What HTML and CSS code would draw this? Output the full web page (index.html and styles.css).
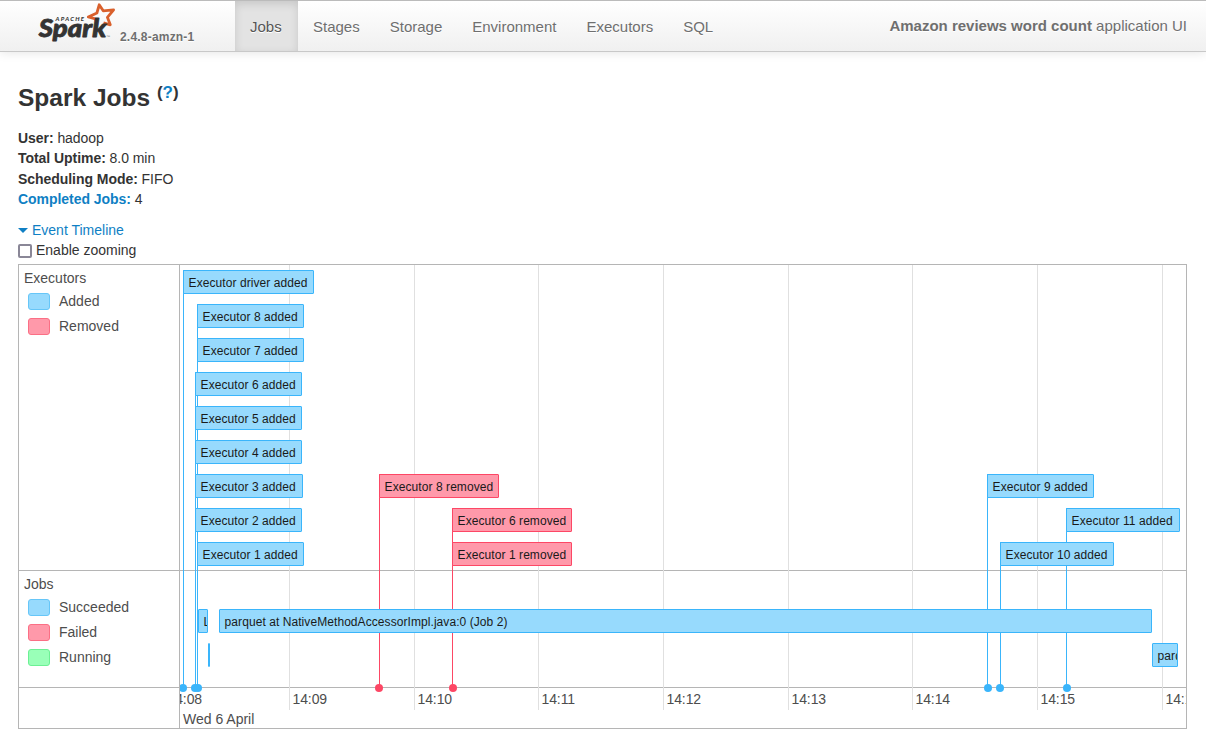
FILE: index.html
```html
<!DOCTYPE html>
<html lang="en">
<head>
<meta charset="utf-8">
<title>Spark Jobs</title>
<link rel="stylesheet" href="styles.css">
</head>
<body>
<header class="navbar">
  <a class="brand">
    <svg class="logo" width="82" height="50" viewBox="30 0 82 50" overflow="visible">
      <path class="logo-star" d="M96.500 20.500 94.500 18.600 88.300 17 96.900 13 99.200 4.800 103.200 10.800 113.600 9.800 107.400 17.300 110.300 24.800 103.500 22.800"/>
      <text class="logo-small" x="55.500" y="20.600" textLength="28.500">APACHE</text>
      <text class="logo-word" x="38.800" y="37.300" textLength="67.500" lengthAdjust="spacingAndGlyphs">Spark</text>
      <text class="logo-tm" x="106" y="37.500">™</text>
    </svg>
    <span class="version">2.4.8-amzn-1</span>
  </a>
  <nav class="tabs">
    <a class="tab active">Jobs</a><a class="tab">Stages</a><a class="tab">Storage</a><a class="tab">Environment</a><a class="tab">Executors</a><a class="tab">SQL</a>
  </nav>
  <p class="app-name"><strong>Amazon reviews word count</strong> application UI</p>
</header>
<main class="content">
  <h3 class="title">Spark Jobs <sup>(<a class="link">?</a>)</sup></h3>
  <ul class="summary">
    <li><strong>User:</strong> hadoop</li>
    <li><strong>Total Uptime:</strong> 8.0 min</li>
    <li><strong>Scheduling Mode:</strong> FIFO</li>
    <li><a class="link"><strong>Completed Jobs:</strong></a> 4</li>
  </ul>
  <div class="expand link"><span class="arrow"></span>Event Timeline</div>
  <div class="zooming"><span class="checkbox"></span><span class="zooming-label">Enable zooming</span></div>
  <section class="timeline">
    <div class="labels">
      <div class="group">
        <div class="group-name">Executors</div>
        <div class="legend"><i class="swatch blue"></i>Added</div>
        <div class="legend"><i class="swatch red"></i>Removed</div>
      </div>
      <div class="group">
        <div class="group-name">Jobs</div>
        <div class="legend"><i class="swatch blue"></i>Succeeded</div>
        <div class="legend"><i class="swatch red"></i>Failed</div>
        <div class="legend"><i class="swatch green"></i>Running</div>
      </div>
    </div>
    <div class="canvas" id="canvas">
      <div class="lane"></div>
      <div class="lane"></div>
      <div class="axis">Wed 6 April</div>
    </div>
  </section>
</main>
<script src="timeline.js"></script>
</body>
</html>
```

FILE: styles.css
```css
* { box-sizing: border-box; }
body {
  margin: 0;
  height: 753px;
  overflow: hidden;
  background: #fff;
  color: #333;
  font: 14px/20px "Liberation Sans", Arial, sans-serif;
}
.navbar {
  display: flex;
  height: 52px;
  border-top: 1px solid #bbb;
  border-bottom: 1px solid #c8c8c8;
  background: linear-gradient(#fff, #f0f0f0);
  box-shadow: 0 1px 10px rgba(0, 0, 0, .1);
  color: #6f6f6f;
  font-size: 15px;
  text-shadow: 0 1px 0 #fff;
}
.brand { display: flex; width: 235px; padding-left: 30px; }
.logo { flex: none; margin-top: -1px; text-shadow: none; }
.logo-star { fill: none; stroke: #d9602c; stroke-width: 2.8; stroke-linejoin: round; }
.logo-small { font: italic 900 6px Lato, sans-serif; fill: #3a3a3a; }
.logo-word { font: italic 900 24.5px Lato, sans-serif; fill: #333; stroke: #333; stroke-width: .8; stroke-linejoin: round; }
.logo-tm { font: 4px "Liberation Sans", sans-serif; fill: #777; }
.version { margin: 26px 0 0 8px; font-size: 12px; font-weight: bold; letter-spacing: .2px; white-space: nowrap; }
.tabs { display: flex; }
.tab { padding: 16px 15px 0; }
.tab.active { width: 63px; background: #e3e3e3; color: #555; box-shadow: inset 0 3px 8px rgba(0, 0, 0, .125); }
.app-name { margin: 15px 19px 0 auto; }
.content { padding: 25px 19px 0 18px; }
.title { margin: 0; height: 40px; font-size: 24.5px; line-height: 42px; }
.title sup { font-size: 17px; line-height: 0; vertical-align: baseline; position: relative; top: -8px; }
.link { color: #0f7fc4; }
.summary { margin: 11px 0 11px; padding: 0; list-style: none; line-height: 20.3px; height: 81px; letter-spacing: -.05px; }
.expand { display: flex; align-items: center; }
.arrow { margin-right: 4px; border: 5px solid transparent; border-top-color: #0f7fc4; border-bottom: 0; }
.zooming { display: flex; align-items: center; gap: 4px; height: 24px; padding-bottom: 3px; }
.zooming-label { margin-top: -2px; }
.checkbox { width: 14px; height: 14px; border: 2px solid #8a8797; border-radius: 2px; }
.timeline { display: grid; grid-template-columns: 161px 1fr; height: 465px; border: 1px solid #b5b5b5; color: #4d4d4d; }
.labels { display: grid; grid-template-rows: 306px 117px 1fr; border-right: 1px solid #b5b5b5; }
.group { padding: 3px 0 0 5px; border-bottom: 1px solid #b5b5b5; }
.group-name { height: 20px; }
.legend { display: flex; align-items: center; gap: 9px; height: 25px; padding: 0 0 0 4px; }
.swatch { width: 22px; height: 17px; margin-top: 2px; border: 1.5px solid; border-radius: 3px; }
.blue { background: #97dafd; border-color: #66c6f8; }
.red { background: #ff99aa; border-color: #fb6f85; }
.green { background: #99ffb8; border-color: #6cf094; }
.canvas { position: relative; display: grid; grid-template-rows: 306px 117px 1fr; overflow: hidden; }
.lane { border-bottom: 1px solid #b5b5b5; }
.axis { padding: 21px 0 0 3px; }
.tick { position: absolute; top: 0; width: 1px; height: 445px; background: #e0e0e0; }
.hour { position: absolute; top: 424px; letter-spacing: -.1px; }
.stem { position: absolute; width: 1px; background: #3ab5fb; }
.dot { position: absolute; top: 419px; width: 8px; height: 8px; border-radius: 50%; background: #3ab5fb; }
.stem.removed, .dot.removed { background: #fd4765; }
.item {
  position: absolute;
  height: 24px;
  padding-left: 4.6px;
  overflow: hidden;
  border: 1px solid #3ab5fb;
  border-radius: 1px;
  background: #97dafd;
  color: #1a1a1a;
  font-size: 12px;
  letter-spacing: .07px;
  line-height: 24px;
  white-space: nowrap;
}
.item.removed { border-color: #fd4765; background: #ff99aa; }
.item.sliver { padding: 0; background: #3ab5fb; }
```

FILE: timeline.js
```js
const canvas = document.getElementById('canvas');

function add(cls, style, text) {
  const el = document.createElement('div');
  el.className = cls;
  for (const key in style) el.style[key] = style[key] + 'px';
  if (text) el.textContent = text;
  canvas.appendChild(el);
}

[109, 234, 358, 483, 608, 732, 857, 982].forEach((x, i) => {
  add('tick', { left: x });
  add('hour', { left: x + 3.5 }, '14:' + String(9 + i).padStart(2, '0'));
});
add('hour', { left: -12.5 }, '14:08');

// [left, top, width, label, class]
const events = [
  [3, 5, 131, 'Executor driver added', ''],
  [17, 39, 107, 'Executor 8 added', ''],
  [17, 73, 107, 'Executor 7 added', ''],
  [15, 107, 107, 'Executor 6 added', ''],
  [15, 141, 107, 'Executor 5 added', ''],
  [15, 175, 107, 'Executor 4 added', ''],
  [15, 209, 108, 'Executor 3 added', ''],
  [15, 243, 107, 'Executor 2 added', ''],
  [17, 277, 107, 'Executor 1 added', ''],
  [199, 209, 120, 'Executor 8 removed', 'removed'],
  [272, 243, 120, 'Executor 6 removed', 'removed'],
  [272, 277, 120, 'Executor 1 removed', 'removed'],
  [807, 209, 107, 'Executor 9 added', ''],
  [886, 243, 114, 'Executor 11 added', ''],
  [820, 277, 114, 'Executor 10 added', '']
];
events.forEach(([x, y, , , cls]) => add('stem ' + cls, { left: x, top: y, height: 422 - y }));
events.forEach(([x, y, w, label, cls]) => add('item ' + cls, { left: x, top: y, width: w }, label));

[[-1, ''], [11, ''], [14, ''], [195, 'removed'], [269, 'removed'], [804, ''], [816, ''], [883, '']]
  .forEach(([x, cls]) => add('dot ' + cls, { left: x }));

const jobs = [
  [18, 344, 10, 'L', ''],
  [39, 344, 933, 'parquet at NativeMethodAccessorImpl.java:0 (Job 2)', ''],
  [28, 378, 2, '', 'sliver'],
  [972, 378, 26, 'parquet', '']
];
jobs.forEach(([x, y, w, label, cls]) => add('item ' + cls, { left: x, top: y, width: w }, label));
```
